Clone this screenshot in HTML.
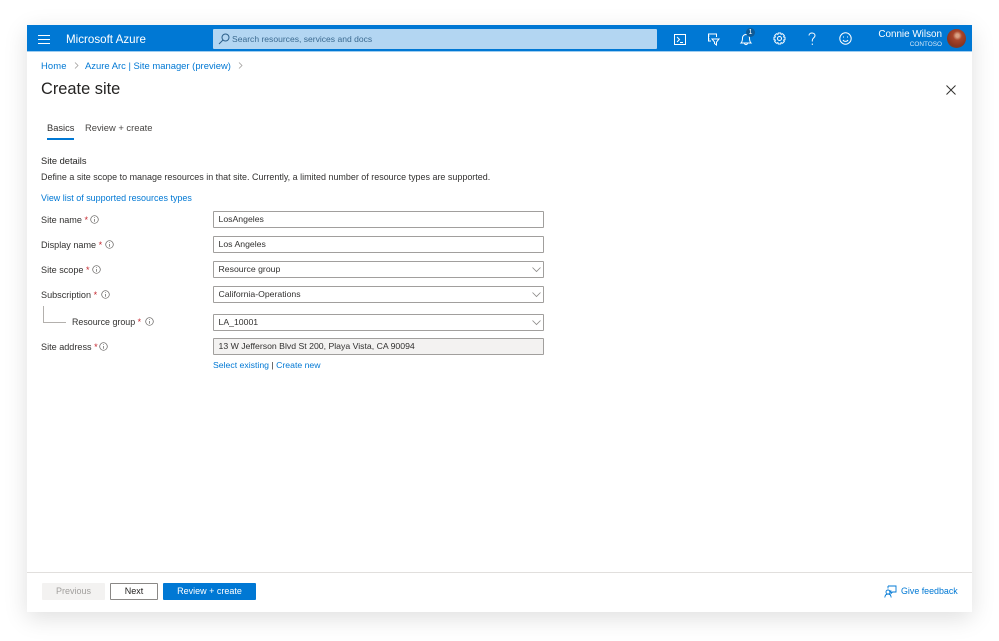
<!DOCTYPE html>
<html><head><meta charset="utf-8"><style>
html,body{margin:0;padding:0;background:#fff}
body{width:999px;height:641px;position:relative;overflow:hidden;font-family:"Liberation Sans",sans-serif;font-size:9px;color:#323130;filter:blur(.3px)}
.win{position:absolute;left:27px;top:25px;width:945px;height:587px;background:#fff;box-shadow:0 6px 22px rgba(0,0,0,.13)}
.t{position:absolute;white-space:nowrap;line-height:12px}
.l{color:#0078d4}
.box{position:absolute;left:213px;width:329px;height:15px;border:1px solid #a19f9d;border-radius:1px;background:#fff;line-height:15px;text-indent:4.500px;white-space:nowrap;font-size:8.700px}
.r{color:#c4262e}
svg{position:absolute;overflow:visible;fill:none}
</style></head><body>
<div class="win"></div>
<div style="position:absolute;left:27px;top:25px;width:945px;height:27px;background:#0078d4;border-bottom:1px solid #9fcdf0;box-sizing:border-box"></div>
<svg style="left:38px;top:35px" width="12" height="9" stroke="#fff" stroke-width="1"><path d="M0 .5H12M0 4.500H12M0 8.500H12"/></svg>
<div class="t" style="left:66px;top:33px;color:#fff;font-size:11.600px;line-height:14px">Microsoft Azure</div>
<div style="position:absolute;left:213px;top:29px;width:444px;height:20px;background:#b3d6f2;border-radius:1px"></div>
<svg style="left:218px;top:33px" width="12" height="12" stroke="#2b5f8a" stroke-width="1"><circle cx="7.500" cy="4.500" r="3.500"/><path d="M5 7L1 11"/></svg>
<div class="t" style="left:232px;top:33px;color:#3b6a90;font-size:8.550px">Search resources, services and docs</div>

<svg style="left:674px;top:33px" width="12" height="12" stroke="#fff" stroke-width="1"><rect x=".5" y="1.500" width="11" height="10"/><path d="M3 4L5.500 6.500L3 9M6 9.500H9"/></svg>
<svg style="left:707px;top:33px" width="13" height="13" stroke="#fff" stroke-width="1"><path d="M4 8H1.500V1H9.500V4M2.500 3H1M2.500 6H1M5 6H12L9.500 9V12L7.500 10.500V9Z"/></svg>
<svg style="left:740px;top:31px" width="13" height="15" stroke="#fff" stroke-width="1"><path d="M1 12H11C9.500 10.500 9.500 9 9.500 7C9.500 5 8 3.500 6 3.500C4 3.500 2.500 5 2.500 7C2.500 9 2.500 10.500 1 12ZM4.500 12.500C5 14 7 14 7.500 12.500"/></svg>
<div style="position:absolute;left:746px;top:28px;width:9px;height:9px;border-radius:50%;background:#0f5a96;color:#fff;font-size:7px;line-height:9px;text-align:center">1</div>
<svg style="left:773px;top:32px" width="13" height="13" stroke="#fff" stroke-width="1"><circle cx="6.500" cy="6.500" r="2"/><path d="M5.300 1H7.700L8.100 2.400L9.500 1.700L11.300 3.500L10.600 4.900L12 5.300V7.700L10.600 8.100L11.300 9.500L9.500 11.300L8.100 10.600L7.700 12H5.300L4.900 10.600L3.500 11.300L1.700 9.500L2.400 8.100L1 7.700V5.300L2.400 4.900L1.700 3.500L3.500 1.700L4.900 2.400Z"/></svg>
<svg style="left:808px;top:32px" width="9" height="14" stroke="#fff" stroke-width="1"><path d="M1 3.500C1 1.800 2.500 1 4 1C5.800 1 7 2.200 7 3.600C7 5.800 4.300 5.800 4.300 8.500V9.500M4.300 11.500V13"/></svg>
<svg style="left:839px;top:32px" width="13" height="13" stroke="#fff" stroke-width="1"><circle cx="6.500" cy="6.500" r="5.700"/><path d="M4 8C5 9.800 8 9.800 9 8M4.500 4.500V5.500M8.500 4.500V5.500"/></svg>
<div class="t" style="right:57px;top:29px;color:#fff;font-size:9.900px">Connie Wilson</div>
<div class="t" style="right:57px;top:39px;color:#d5e8f7;font-size:6.400px;line-height:11px">CONTOSO</div>
<div style="position:absolute;left:947px;top:29px;width:19px;height:19px;border-radius:50%;background:radial-gradient(circle at 55% 35%,#d9a184 0 10%,#a8452b 28%,#8a3420 65%,#3d5a5a 100%)"></div>

<div class="t l" style="left:41px;top:60px;font-size:9.430px;letter-spacing:.1px">Home</div>
<svg style="left:74px;top:62px" width="5" height="8" stroke="#a19f9d" stroke-width=".8"><path d="M1 .5L4 3.500L1 6.500"/></svg>
<div class="t l" style="left:85px;top:60px;font-size:9.430px">Azure Arc | Site manager (preview)</div>
<svg style="left:238px;top:62px" width="5" height="8" stroke="#a19f9d" stroke-width=".8"><path d="M1 .5L4 3.500L1 6.500"/></svg>
<div class="t" style="left:41px;top:79px;font-size:16.400px;line-height:20px;color:#252423">Create site</div>
<svg style="left:946px;top:85px" width="10" height="10" stroke="#323130" stroke-width="1"><path d="M.5 .5L9.500 9.500M9.500 .5L.5 9.500"/></svg>

<div class="t" style="left:47px;top:122px;font-size:9.300px">Basics</div>
<div style="position:absolute;left:47px;top:138px;width:27px;height:2px;background:#0078d4"></div>
<div class="t" style="left:85px;top:122px;font-size:9.400px;color:#484644">Review + create</div>

<div class="t" style="left:41px;top:155px;font-size:9.300px;color:#252423">Site details</div>
<div class="t" style="left:41px;top:171px;font-size:8.960px">Define a site scope to manage resources in that site. Currently, a limited number of resource types are supported.</div>
<div class="t l" style="left:41px;top:191.500px;font-size:8.980px">View list of supported resources types</div>

<div class="t" style="left:41px;top:213.500px;font-size:9.100px">Site name <span class="r">*</span></div>
<div class="t" style="left:41px;top:238.500px;font-size:9.100px">Display name <span class="r">*</span></div>
<div class="t" style="left:41px;top:263.500px;font-size:9.100px">Site scope <span class="r">*</span></div>
<div class="t" style="left:41px;top:288.500px;font-size:9.100px">Subscription <span class="r">*</span></div>
<div class="t" style="left:72px;top:316px;font-size:8.900px">Resource group <span class="r">*</span></div>
<div class="t" style="left:41px;top:340.500px;font-size:9.100px">Site address <span class="r">*</span></div>
<svg style="left:90px;top:215px" width="9" height="9" stroke="#605e5c" stroke-width=".7"><circle cx="4.500" cy="4.500" r="3.800"/><path d="M4.500 4V6.800M4.500 2.200V3"/></svg>
<svg style="left:105px;top:240px" width="9" height="9" stroke="#605e5c" stroke-width=".7"><circle cx="4.500" cy="4.500" r="3.800"/><path d="M4.500 4V6.800M4.500 2.200V3"/></svg>
<svg style="left:92px;top:264.500px" width="9" height="9" stroke="#605e5c" stroke-width=".7"><circle cx="4.500" cy="4.500" r="3.800"/><path d="M4.500 4V6.800M4.500 2.200V3"/></svg>
<svg style="left:101px;top:289.500px" width="9" height="9" stroke="#605e5c" stroke-width=".7"><circle cx="4.500" cy="4.500" r="3.800"/><path d="M4.500 4V6.800M4.500 2.200V3"/></svg>
<svg style="left:145px;top:317px" width="9" height="9" stroke="#605e5c" stroke-width=".7"><circle cx="4.500" cy="4.500" r="3.800"/><path d="M4.500 4V6.800M4.500 2.200V3"/></svg>
<svg style="left:99px;top:342px" width="9" height="9" stroke="#605e5c" stroke-width=".7"><circle cx="4.500" cy="4.500" r="3.800"/><path d="M4.500 4V6.800M4.500 2.200V3"/></svg>
<svg style="left:43px;top:306px" width="24" height="18" stroke="#b3b0ad" stroke-width="1"><path d="M.5 0V16.500H23"/></svg>

<div class="box" style="top:211px">LosAngeles</div>
<div class="box" style="top:236px">Los Angeles</div>
<div class="box" style="top:261px">Resource group</div>
<div class="box" style="top:286px">California-Operations</div>
<div class="box" style="top:314px">LA_10001</div>
<div class="box" style="top:338px;background:#f3f2f1">13 W Jefferson Blvd St 200, Playa Vista, CA 90094</div>
<svg style="left:532px;top:266.500px" width="9" height="5" stroke="#8a8886" stroke-width=".8"><path d="M.5 .5L4.500 4.500L8.500 .5"/></svg>
<svg style="left:532px;top:291.500px" width="9" height="5" stroke="#8a8886" stroke-width=".8"><path d="M.5 .5L4.500 4.500L8.500 .5"/></svg>
<svg style="left:532px;top:319.500px" width="9" height="5" stroke="#8a8886" stroke-width=".8"><path d="M.5 .5L4.500 4.500L8.500 .5"/></svg>
<div class="t" style="left:213px;top:358.500px;font-size:8.700px"><span class="l">Select existing</span> | <span class="l">Create new</span></div>

<div style="position:absolute;left:27px;top:572px;width:945px;height:1px;background:#e1dfdd"></div>
<div style="position:absolute;left:42px;top:583px;width:63px;height:17px;background:#f3f2f1;color:#a19f9d;text-align:center;line-height:17px;border-radius:1px">Previous</div>
<div style="position:absolute;left:110px;top:583px;width:46px;height:15px;border:1px solid #8a8886;color:#201f1e;text-align:center;line-height:15px;border-radius:1px">Next</div>
<div style="position:absolute;left:163px;top:583px;width:93px;height:17px;background:#0078d4;color:#fff;text-align:center;line-height:17px;border-radius:1px">Review + create</div>
<svg style="left:884px;top:585px" width="13" height="13" stroke="#0078d4" stroke-width=".9"><path d="M4 1H12V7H8.500L7 8.500V6H5M4 1V3.500"/><circle cx="4" cy="7" r="2"/><path d="M.8 12.500C1 10 2.500 9 4 9C5.500 9 7 10 7.200 12.500"/></svg>
<div class="t l" style="left:901px;top:585px;font-size:8.900px">Give feedback</div>
</body></html>
